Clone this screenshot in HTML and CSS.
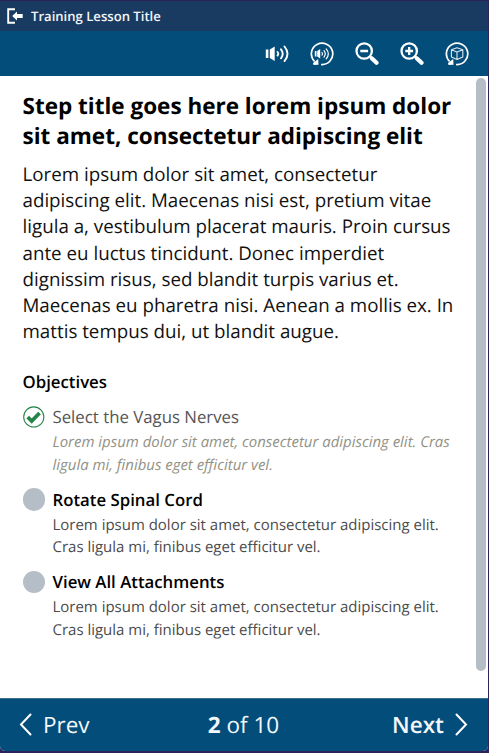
FILE: index.html
```html
<!DOCTYPE html>
<html lang="en">
<head>
<meta charset="utf-8">
<title>Training Lesson Title</title>
<link rel="stylesheet" href="styles.css">
</head>
<body>
<div class="panel">
  <header class="titlebar">
    <svg class="exit" width="17" height="16" viewBox="0 0 17 16"><path d="M8 1.2H1.2V14.8H8" fill="none" stroke="#fff" stroke-width="1.9"/><path d="M5.200 8l4.800-4.600v2.700H15.700v3.800H10v2.700z" fill="#fff"/></svg>
    <span>Training Lesson Title</span>
  </header>
  <nav class="toolbar">
    <svg width="24" height="24" viewBox="0 0 24 24"><path d="M0.800 7.500h2.600v8.500h-2.600zM4.800 7.500L9.700 4.500v14.500l-4.900-3z" fill="#fff"/><path d="M12.500 10q1.500 1.800 0 3.600M16 7.300q3.500 4.500 0 9M19.500 4.500q6 7.300 0 14.600" fill="none" stroke="#fff" stroke-width="1.900" stroke-linecap="round"/></svg>
    <svg width="24" height="24" viewBox="0 0 24 24"><path d="M4.600 19.500A10.700 10.700 0 1 1 11 22.500" fill="none" stroke="#fff" stroke-width="1.700"/><path d="M3 21l5.200-4 .3 5.800-5 .2z" fill="#fff"/><path d="M4.800 9h1.700v5.500H4.800zM7.200 9L10.200 7v9.500l-3-2z" fill="#fff"/><path d="M12 10.500q1 1.300 0 2.600M14 8.700q2.500 3.200 0 6.400M16.200 6.900q4.200 5 0 10" fill="none" stroke="#fff" stroke-width="1.200" stroke-linecap="round"/></svg>
    <svg width="24" height="24" viewBox="0 0 24 24"><circle cx="9.200" cy="9" r="7.700" fill="none" stroke="#fff" stroke-width="2.300"/><path d="M5.300 9h7.800" stroke="#fff" stroke-width="2.300"/><path d="M15 14.500l2 2" stroke="#fff" stroke-width="2.500"/><path d="M17 16.500l4.500 4.300" stroke="#fff" stroke-width="4.200" stroke-linecap="round"/></svg>
    <svg width="24" height="24" viewBox="0 0 24 24"><circle cx="9.200" cy="9" r="7.700" fill="none" stroke="#fff" stroke-width="2.300"/><path d="M5.300 9h7.800M9.200 5.100v7.800" stroke="#fff" stroke-width="2.300"/><path d="M15 14.500l2 2" stroke="#fff" stroke-width="2.500"/><path d="M17 16.500l4.500 4.300" stroke="#fff" stroke-width="4.200" stroke-linecap="round"/></svg>
    <svg width="24" height="24" viewBox="0 0 24 24"><path d="M4.600 19.500A10.700 10.700 0 1 1 11 22.500" fill="none" stroke="#fff" stroke-width="1.700"/><path d="M3 21l5.200-4 .3 5.800-5 .2z" fill="#fff"/><path d="M6.400 7.800L12 5.800 17.800 7.800v7.300L12 17.600l-5.600-2.500zM6.400 7.800L12 10.100 17.800 7.800M12 10.100V17.600" fill="none" stroke="#dce8f0" stroke-width="1.100" stroke-linejoin="round"/></svg>
  </nav>
  <main class="content">
    <h1>Step title goes here lorem ipsum dolor<br>sit amet, consectetur adipiscing elit</h1>
    <p class="intro">Lorem ipsum dolor sit amet, consectetur<br>adipiscing elit. Maecenas nisi est, pretium vitae<br>ligula a, vestibulum placerat mauris. Proin cursus<br>ante eu luctus tincidunt. Donec imperdiet<br>dignissim risus, sed blandit turpis varius et.<br>Maecenas eu pharetra nisi. Aenean a mollis ex. In<br>mattis tempus dui, ut blandit augue.</p>
    <h2>Objectives</h2>
    <ul class="objectives">
      <li class="done">
        <svg class="mark" width="23" height="23" viewBox="0 0 23 23"><circle cx="11" cy="11.200" r="10.300" fill="#fff" stroke="#238447" stroke-width="1.100"/><path d="M4.800 11.200l4.100 4.200 8-8.300" fill="none" stroke="#238447" stroke-width="3.800"/></svg>
        <div><h3>Select the Vagus Nerves</h3><p>Lorem ipsum dolor sit amet, consectetur adipiscing elit. Cras<br>ligula mi, finibus eget efficitur vel.</p></div>
      </li>
      <li>
        <span class="mark dot"></span>
        <div><h3>Rotate Spinal Cord</h3><p>Lorem ipsum dolor sit amet, consectetur adipiscing elit.<br>Cras ligula mi, finibus eget efficitur vel.</p></div>
      </li>
      <li>
        <span class="mark dot"></span>
        <div><h3>View All Attachments</h3><p>Lorem ipsum dolor sit amet, consectetur adipiscing elit.<br>Cras ligula mi, finibus eget efficitur vel.</p></div>
      </li>
    </ul>
    <div class="scrollbar"></div>
  </main>
  <footer class="pager">
    <span class="prev"><svg width="13" height="23" viewBox="0 0 13 23"><path d="M11.500 1.500L2 11.500l9.500 10" fill="none" stroke="#fff" stroke-width="2" stroke-linecap="round"/></svg>Prev</span>
    <span class="count"><b>2</b> of 10</span>
    <span class="next">Next<svg width="13" height="23" viewBox="0 0 13 23"><path d="M1.500 1.500l9.500 10-9.500 10" fill="none" stroke="#fff" stroke-width="2" stroke-linecap="round"/></svg></span>
  </footer>
</div>
</body>
</html>
```
FILE: styles.css
```css
* { box-sizing: border-box; margin: 0; padding: 0; }
body {
  width: 489px; height: 753px; overflow: hidden;
  padding: 1px 1px 2px 0;
  background: #2b2359;
  font-family: "Open Sans", "Noto Sans", sans-serif;
  text-rendering: geometricPrecision;
  white-space: nowrap;
}
svg { display: block; flex: none; }
.panel { height: 750px; display: flex; flex-direction: column; background: #fff; border-radius: 0 0 5px 5px; overflow: hidden; }
.titlebar { height: 30px; flex: none; display: flex; align-items: center; gap: 7px; padding-left: 7px; background: #193b62; color: #f2f5f8; font-size: 13.100px; font-weight: 600; }
.toolbar { height: 45px; flex: none; display: flex; align-items: center; justify-content: flex-end; gap: 21px; padding-right: 19px; background: #034d7b; }
.content { position: relative; flex: 1; padding: 15px 0 0 22.500px; }
h1 { font-size: 22.500px; line-height: 30px; font-weight: 700; color: #000; }
.intro { margin-top: 11px; font-size: 18.750px; line-height: 26.200px; color: #111; }
h2 { margin-top: 25px; font-size: 16.800px; line-height: 24px; font-weight: 600; color: #000; }
.objectives { list-style: none; margin-top: 11px; }
li { display: flex; gap: 7.500px; height: 82.500px; }
.mark { flex: none; width: 22.500px; height: 22.500px; margin-top: 0.500px; }
.dot { border-radius: 50%; background: #b5bdc6; }
h3 { font-size: 16.800px; line-height: 24px; font-weight: 600; color: #000; }
li p { margin-top: 2px; font-size: 14.990px; line-height: 22.500px; color: #4b4b4b; }
.done h3 { font-weight: 400; color: #555; }
.done p { font-size: 14.950px; font-style: italic; color: #929286; }
.scrollbar { position: absolute; top: 2px; right: 2px; width: 10px; height: 593px; border-radius: 5px; background: #b5bdc6; }
.pager { height: 53px; flex: none; display: grid; grid-template-columns: 1fr auto 1fr; align-items: center; padding: 0 20px 1px 19px; background: #034d7b; border-top: 1px solid #3b718f; color: #f5f8fa; font-size: 22.500px; }
.prev, .next { display: flex; align-items: center; gap: 11px; }
.next { justify-content: flex-end; font-weight: 600; }
```
